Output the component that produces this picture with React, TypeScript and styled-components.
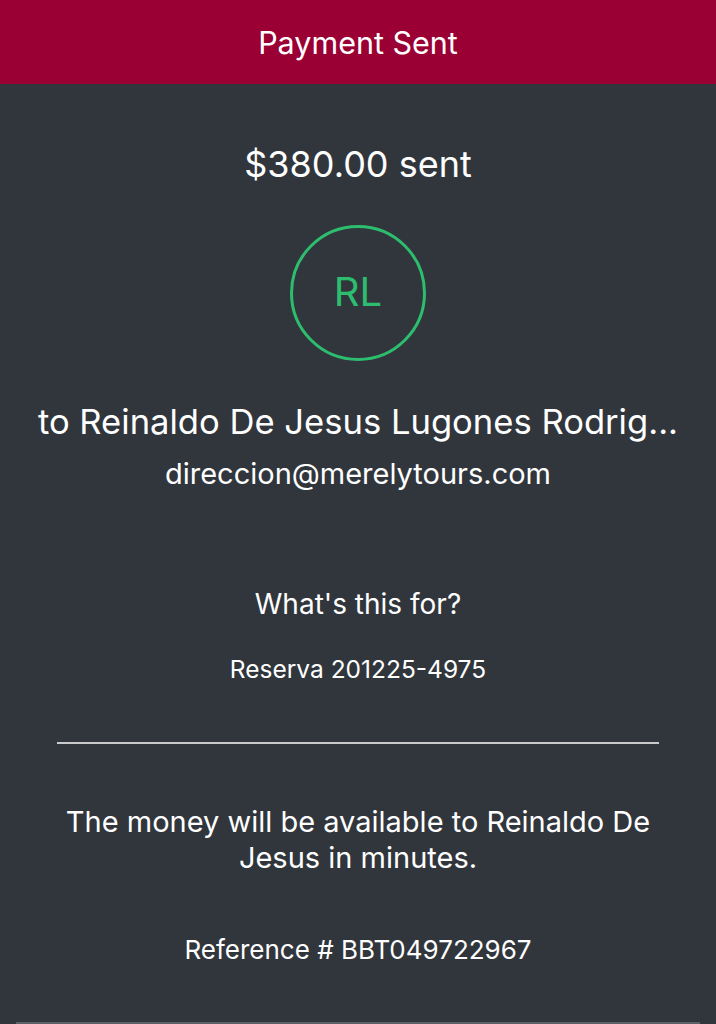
import React from "react";
import styled, { createGlobalStyle } from "styled-components";

const GlobalStyle = createGlobalStyle`
  html, body {
    margin: 0;
    padding: 0;
    background: #31363d;
  }
  body {
    font-family: Inter, Roboto, "Liberation Sans", sans-serif;
    -webkit-font-smoothing: antialiased;
  }
`;

const Screen = styled.div`
  width: 716px;
  height: 1024px;
  overflow: hidden;
  background: #31363d;
  color: #ffffff;
  display: flex;
  flex-direction: column;
`;

const Header = styled.header`
  height: 84px;
  flex-shrink: 0;
  background: #9b0034;
  display: flex;
  align-items: center;
  justify-content: center;
  font-size: 30.5px;
  font-weight: 400;
`;

const Content = styled.main`
  display: flex;
  flex-direction: column;
  align-items: center;
  text-align: center;
  flex: 1;
`;

const Amount = styled.h1`
  margin: 59px 0 0;
  font-size: 36px;
  font-weight: 400;
  line-height: 42px;
`;

const Avatar = styled.div`
  margin-top: 40px;
  width: 130px;
  height: 130px;
  border: 3px solid #2dbd6e;
  border-radius: 50%;
  display: flex;
  align-items: center;
  justify-content: center;
  color: #2dbd6e;
  font-size: 40px;
  line-height: 1;
  padding-bottom: 3px;
  box-sizing: border-box;
  width: 136px;
  height: 136px;
`;

const Recipient = styled.div`
  margin-top: 39px;
  font-size: 34.6px;
  line-height: 42px;
  white-space: nowrap;
`;

const Email = styled.div`
  margin-top: 15px;
  font-size: 29px;
  line-height: 34px;
`;

const Label = styled.div<{ $size: number; $top: number }>`
  margin-top: ${(p) => p.$top}px;
  font-size: ${(p) => p.$size}px;
  line-height: 34px;
`;

const Divider = styled.hr`
  margin: 56px 0 0;
  width: 602px;
  border: none;
  border-top: 2px solid #c9cacc;
`;

const Note = styled.p`
  margin: 60px 0 0;
  width: 640px;
  font-size: 29px;
  line-height: 36px;
`;

const BottomEdge = styled.div`
  margin-top: auto;
  width: 684px;
  height: 2px;
  background: #5b6169;
`;

export default function App() {
  return (
    <>
      <GlobalStyle />
      <Screen>
        <Header>Payment Sent</Header>
        <Content>
          <Amount>$380.00 sent</Amount>
          <Avatar>RL</Avatar>
          <Recipient>to Reinaldo De Jesus Lugones Rodrig...</Recipient>
          <Email>direccion@merelytours.com</Email>
          <Label $size={28} $top={96}>What's this for?</Label>
          <Label $size={24.5} $top={31}>Reserva 201225-4975</Label>
          <Divider />
          <Note>The money will be available to Reinaldo De Jesus in minutes.</Note>
          <Label $size={26} $top={57}>Reference # BBT049722967</Label>
          <BottomEdge />
        </Content>
      </Screen>
    </>
  );
}
